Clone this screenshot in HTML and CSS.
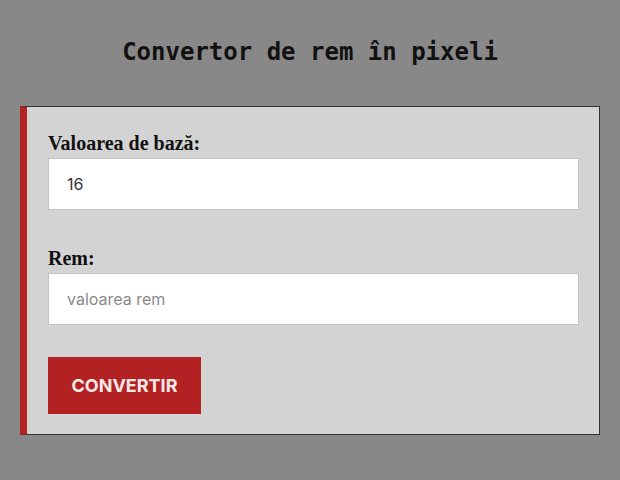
FILE: index.html
```html
<!DOCTYPE html>
<html lang="ro">
<head>
<meta charset="utf-8">
<title>Convertor de rem în pixeli</title>
<link rel="stylesheet" href="styles.css">
</head>
<body>
<div class="page">
  <h1 class="title">Convertor de rem în pixeli</h1>
  <form class="card">
    <label class="label" for="base">Valoarea de bază:</label>
    <input class="field" id="base" type="text" value="16">
    <label class="label label-second" for="rem">Rem:</label>
    <input class="field" id="rem" type="text" placeholder="valoarea rem">
    <button class="btn" type="button">CONVERTIR</button>
  </form>
</div>
</body>
</html>
```
FILE: styles.css
```css
html, body {
  margin: 0;
  padding: 0;
  background: #888888;
}
.page {
  padding: 0 20px;
}
.title {
  margin: 38px 0 40px;
  font-family: "DejaVu Sans Mono", "Liberation Mono", monospace;
  font-weight: bold;
  font-size: 24px;
  line-height: 28px;
  text-align: center;
  color: #111;
}
.card {
  display: flex;
  flex-direction: column;
  align-items: flex-start;
  background: #d3d3d3;
  border: 1px solid #333;
  border-left: 7px solid #b22222;
  padding: 25px 20px 20px 21px;
  margin: 0;
}
.label {
  font-family: "Liberation Serif", "Times New Roman", serif;
  font-weight: bold;
  font-size: 20px;
  line-height: 23px;
  color: #111;
  margin-bottom: 3px;
}
.label-second {
  margin-top: 37px;
}
.field {
  box-sizing: border-box;
  width: 100%;
  height: 52px;
  margin: 0;
  padding: 0 18px;
  border: 1px solid #c4c4c4;
  background: #fff;
  font-family: Inter, Roboto, sans-serif;
  font-size: 16px;
  color: #333;
  outline: none;
}
.field::placeholder {
  color: #8a8a8a;
}
.btn {
  margin-top: 32px;
  height: 57px;
  width: 153px;
  padding: 0;
  border: none;
  background: #b22222;
  color: #fbe9e9;
  font-family: Inter, Roboto, sans-serif;
  font-weight: bold;
  font-size: 18px;
  cursor: pointer;
}
```
